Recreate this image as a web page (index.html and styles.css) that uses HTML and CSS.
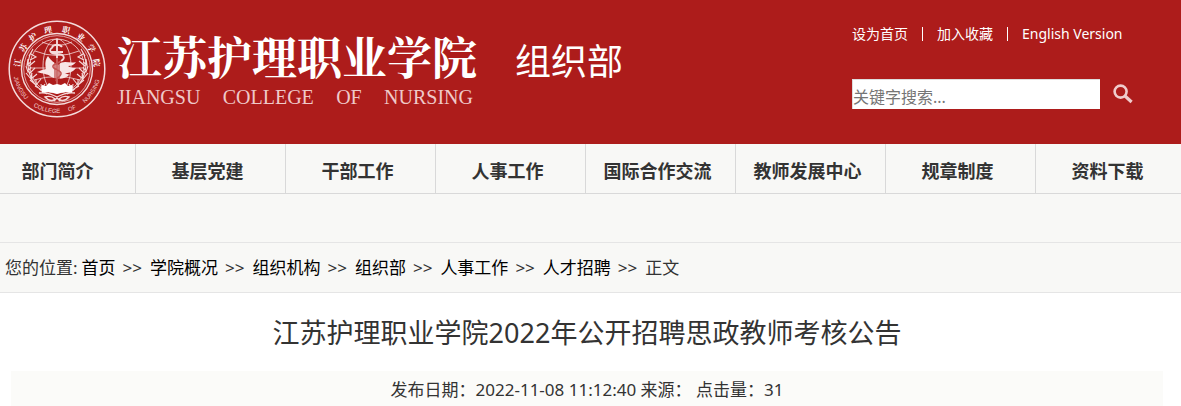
FILE: index.html
```html
<!DOCTYPE html>
<html lang="zh-CN">
<head>
<meta charset="utf-8">
<meta name="viewport" content="width=device-width, initial-scale=1">
<title>江苏护理职业学院2022年公开招聘思政教师考核公告</title>
<link rel="stylesheet" href="styles.css">
</head>
<body>
<header class="header">
  <div class="brand">
    <svg class="emblem" viewBox="0 0 98 98" role="img" aria-label="校徽">
      <defs>
        <path id="ring" d="M5 49A44 44 0 0 0 93 49"/>
      </defs>
      <g fill="none" stroke="#f4dada">
        <circle cx="49" cy="49" r="47.8" stroke-width="1.5"/>
        <circle cx="49" cy="49" r="35.5" stroke-width="1.4"/>
        <circle cx="49" cy="49" r="33.3" stroke-width=".7"/>
        <g stroke-width=".8">
          <circle cx="49" cy="46" r="27"/>
          <ellipse cx="49" cy="46" rx="14" ry="27"/>
          <path d="M49 18V73M22 48H76M27 31Q49 40 71 31M26 60Q49 53 72 60M34 22Q49 29 64 22"/>
        </g>
      </g>
      <g class="emblem-cn">
        <text x="49" y="12" transform="rotate(-81 49 49)">江</text>
        <text x="49" y="12" transform="rotate(-58 49 49)">苏</text>
        <text x="49" y="12" transform="rotate(-37 49 49)">护</text>
        <text x="49" y="12" transform="rotate(-13 49 49)">理</text>
        <text x="49" y="12" transform="rotate(13 49 49)">职</text>
        <text x="49" y="12" transform="rotate(37 49 49)">业</text>
        <text x="49" y="12" transform="rotate(59 49 49)">学</text>
        <text x="49" y="12" transform="rotate(81 49 49)">院</text>
      </g>
      <g class="emblem-en">
        <text><textPath href="#ring" startOffset="8">JIANGSU</textPath></text>
        <text><textPath href="#ring" startOffset="44">COLLEGE</textPath></text>
        <text><textPath href="#ring" startOffset="81">OF</textPath></text>
        <text><textPath href="#ring" startOffset="99">NURSING</textPath></text>
      </g>
      <!-- laurel branches -->
      <g fill="none" stroke="#f4dada" stroke-width="1.1">
        <path d="M25 29C15 44 21 65 39 74M25 29l-4 7M23 34l5 3-6 3M20 39l-1 6 4-3M27 41l-6 5M18 46l2 6 3-5M27 48l-6 6M18 53l5 6 1-6M29 54l-6 5M22 60l6 5v-6M33 59l-5 6M27 66l7 4-1-6M37 64l-4 6"/>
        <path d="M73 29C83 44 77 65 59 74M73 29l4 7M75 34l-5 3 6 3M78 39l1 6-4-3M71 41l6 5M80 46l-2 6-3-5M71 48l6 6M80 53l-5 6-1-6M69 54l6 5M76 60l-6 5v-6M65 59l5 6M71 66l-7 4 1-6M61 64l4 6"/>
      </g>
      <!-- dove -->
      <path fill="#f8e6e6" d="M29 52l5-2 4-1c-1-5-1-9 2-13 3 5 7 7 10 9 6-6 11-1 18-3-2 3-5 4-8 4 3 2 5 2 8 2-4 5-8 5-11 5 2 1 4 2 5 1-5 6-15 6-20 2-3-2-6-2-13-4z"/>
      <!-- staff and serpent -->
      <path fill="none" stroke="#ad1c1b" stroke-width="1" d="M47 40v21M51 40v21"/>
      <path fill="none" stroke="#f4dada" stroke-width="1.8" d="M49 19V38M45 27c-5 3-3 7 4 7s9 4 4 7M44 27c2-3 8-3 10 0M43 32h12"/>
      <path fill="none" stroke="#c45553" stroke-width="1.6" d="M49 38V66M53 41c-4 3-9 3-8 6s9 3 8 7-6 4-5 7"/>
      <!-- open book and ribbon -->
      <path fill="#fff" d="M34 65l4 1 3-3 4 2 4-1 4 1 4-2 3 3 4-1v8q-8-2-15 1-7-3-15-1z"/>
      <path fill="none" stroke="#f4dada" stroke-width="1.4" d="M31 73q9-1 18 4 9-5 18-4M37 77q6-2 10 2c-3 3-7 1-10-2zM61 77q-6-2-10 2c3 3 7 1 10-2zM49 78l-3 3M49 78l3 3"/>
    </svg>
    <div class="brand-name">
      <div class="name-cn">江苏护理职业学院</div>
      <div class="name-en"><span>JIANGSU</span> <span>COLLEGE</span> <span>OF</span> <span>NURSING</span></div>
    </div>
    <div class="department">组织部</div>
  </div>
  <div class="tools">
    <div class="top-links">
      <a href="#">设为首页</a><span class="bar"></span><a href="#">加入收藏</a><span class="bar"></span><a href="#">English Version</a>
    </div>
    <form class="search">
      <input class="search-input" type="text" placeholder="关键字搜索..." aria-label="关键字搜索">
      <button class="search-button" type="button" aria-label="搜索">
        <svg viewBox="0 0 20 20" width="20" height="20" fill="none" stroke="#f0cccc">
          <circle cx="7.6" cy="7.6" r="6" stroke-width="2.6"/>
          <path d="M12 12l6.6 6" stroke-width="3.2"/>
        </svg>
      </button>
    </form>
  </div>
</header>

<nav class="nav">
  <ul class="nav-list">
    <li><a href="#">部门简介</a></li>
    <li><a href="#">基层党建</a></li>
    <li><a href="#">干部工作</a></li>
    <li><a href="#">人事工作</a></li>
    <li><a href="#">国际合作交流</a></li>
    <li><a href="#">教师发展中心</a></li>
    <li><a href="#">规章制度</a></li>
    <li><a href="#">资料下载</a></li>
  </ul>
</nav>

<div class="breadcrumb">
  <span class="label">您的位置:</span>
  <a href="#">首页</a><span class="sep">&gt;&gt;</span>
  <a href="#">学院概况</a><span class="sep">&gt;&gt;</span>
  <a href="#">组织机构</a><span class="sep">&gt;&gt;</span>
  <a href="#">组织部</a><span class="sep">&gt;&gt;</span>
  <a href="#">人事工作</a><span class="sep">&gt;&gt;</span>
  <a href="#">人才招聘</a><span class="sep">&gt;&gt;</span>
  <span>正文</span>
</div>

<main class="article">
  <h1 class="title">江苏护理职业学院2022年公开招聘思政教师考核公告</h1>
  <div class="meta">发布日期：2022-11-08 11:12:40 来源： 点击量：31</div>
</main>
</body>
</html>
```
FILE: styles.css
```css
* {
  box-sizing: border-box;
}

body {
  margin: 0;
  background: #fff;
  color: #333;
  font-family: "Noto Sans", "Noto Sans CJK SC", sans-serif;
  font-size: 17px;
}

a {
  color: inherit;
  text-decoration: none;
}

.header {
  display: flex;
  justify-content: space-between;
  min-height: 144px;
  padding: 20px 48px 0 8px;
  background: #ad1c1b;
  color: #fff;
}

.brand {
  display: flex;
  align-items: flex-start;
}

.emblem {
  width: 98px;
  height: 98px;
}

.emblem-cn {
  fill: #fff;
  font-family: "Noto Serif CJK SC", "Noto Sans CJK SC", sans-serif;
  font-size: 8px;
  font-weight: 700;
  text-anchor: middle;
}

.emblem-en {
  fill: #f0cccc;
  font-family: "Liberation Sans", sans-serif;
  font-size: 6px;
}

.brand-name {
  width: 360px;
  margin: 8px 0 0 11px;
}

.name-cn {
  font-family: "Noto Serif CJK SC", "Noto Sans CJK SC", sans-serif;
  font-size: 45px;
  font-weight: 700;
  line-height: 56px;
  white-space: nowrap;
}

.name-en {
  display: flex;
  justify-content: space-between;
  padding-right: 4px;
  color: #efc9c9;
  font-family: "Liberation Serif", serif;
  font-size: 20px;
  line-height: 26px;
}

.department {
  margin: 16px 0 0 38px;
  font-size: 36px;
  line-height: 52px;
  white-space: nowrap;
}

.tools {
  display: flex;
  flex-direction: column;
  flex-shrink: 0;
  gap: 35px;
  width: 281px;
  padding-top: 4px;
}

.top-links {
  display: flex;
  align-items: center;
  gap: 14px;
  font-size: 14px;
  line-height: 20px;
  white-space: nowrap;
}

.bar {
  width: 1px;
  height: 14px;
  background: #fff;
}

.search {
  display: flex;
  align-items: center;
  gap: 13px;
}

.search-input {
  flex: 1;
  min-width: 0;
  height: 30px;
  padding: 4px 0 0;
  border: 1px solid #ddd;
  border-width: 1px 0 0 1px;
  background: #fff;
  color: #333;
  font: 16px "Noto Sans", "Noto Sans CJK SC", sans-serif;
}

.search-input::placeholder {
  color: #757575;
}

.search-button {
  display: flex;
  padding: 0;
  border: 0;
  background: none;
}

.nav {
  overflow: hidden;
  border-bottom: 1px solid #d9d9d9;
  background: #f8f8f6;
}

.nav-list {
  display: flex;
  min-width: 1200px;
  margin: 0 0 0 -14px;
  padding: 0;
  list-style: none;
}

.nav-list li {
  flex: 0 0 150px;
  padding-right: 6px;
  border-right: 1px solid #d9d9d9;
  font-size: 18px;
  font-weight: 700;
  text-align: center;
}

.nav-list a {
  display: block;
  padding-top: 6px;
  line-height: 43px;
}

.breadcrumb {
  display: flex;
  padding: 50px 5px 0;
  border-bottom: 1px solid #e5e5e5;
  background: linear-gradient(#e5e5e5, #e5e5e5) 0 48px / 100% 1px no-repeat #f8f8f6;
  line-height: 48px;
}

.breadcrumb a {
  color: #000;
}

.label {
  margin-right: 4px;
}

.sep {
  margin: 0 8px 0 7px;
}

.article {
  padding: 18px 18px 0 11px;
}

.title {
  margin: 0;
  font-size: 27px;
  font-weight: 400;
  line-height: 44px;
  text-align: center;
}

.meta {
  margin-top: 16px;
  padding-top: 2px;
  background: #fbfbf9;
  line-height: 33px;
  text-align: center;
}
```
